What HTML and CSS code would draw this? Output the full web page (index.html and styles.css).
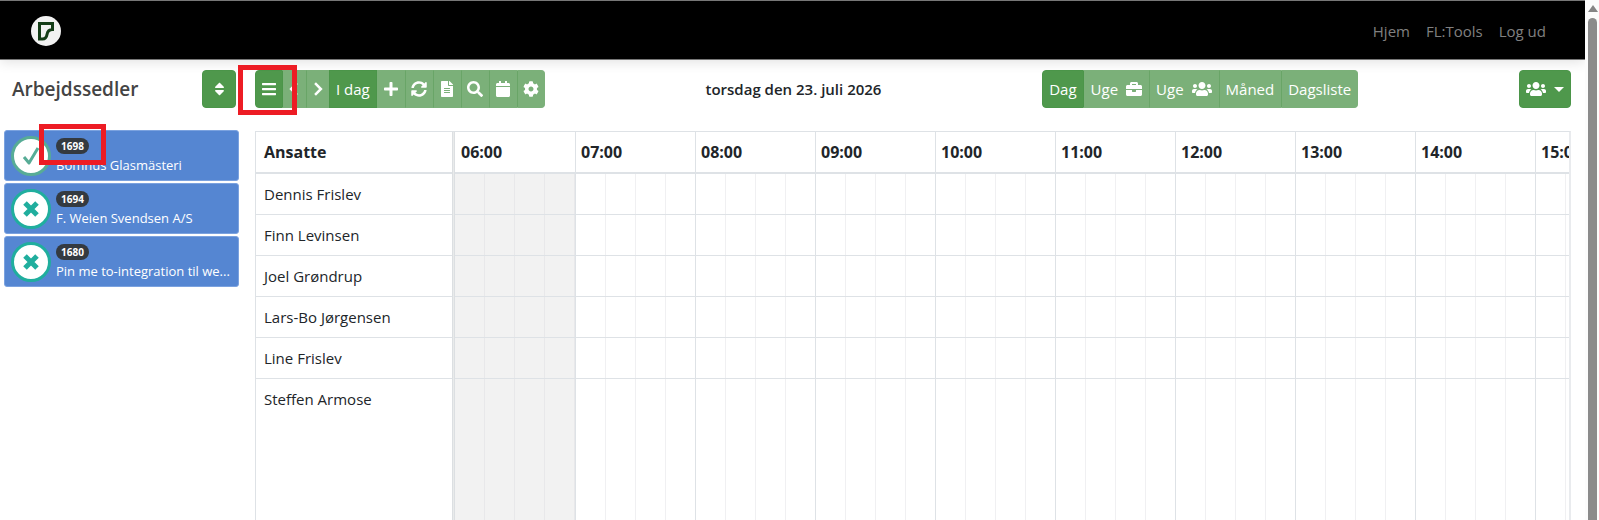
FILE: index.html
```html
<!DOCTYPE html>
<html lang="da">
<head>
    <meta charset="UTF-8">
    <meta name="viewport" content="width=device-width, initial-scale=1.0">
    <title>Arbejdssedler</title>
    <link rel="stylesheet" href="styles.css">
</head>
<body>
    <!-- Icon set -->
    <svg class="icon-defs" aria-hidden="true">
        <symbol id="sort" viewBox="0 0 320 512"><path d="M41 288h238c21.4 0 32.1 25.9 17 41L177 448c-9.4 9.4-24.6 9.4-33.9 0L24 329c-15.1-15.1-4.4-41 17-41zm255-105L177 64c-9.4-9.4-24.6-9.4-33.9 0L24 183c-15.1 15.1-4.4 41 17 41h238c21.4 0 32.1-25.9 17-41z"/></symbol>
        <symbol id="bars" viewBox="0 0 448 512"><path d="M16 132h416c9 0 16-7 16-16V76c0-9-7-16-16-16H16C7 60 0 67 0 76v40c0 9 7 16 16 16zm0 160h416c9 0 16-7 16-16v-40c0-9-7-16-16-16H16c-9 0-16 7-16 16v40c0 9 7 16 16 16zm0 160h416c9 0 16-7 16-16v-40c0-9-7-16-16-16H16c-9 0-16 7-16 16v40c0 9 7 16 16 16z"/></symbol>
        <symbol id="prev" viewBox="0 0 320 512"><path d="M238 70L52 256l186 186" fill="none" stroke="currentColor" stroke-width="80"/></symbol>
        <symbol id="next" viewBox="0 0 320 512"><path d="M82 70l186 186L82 442" fill="none" stroke="currentColor" stroke-width="80"/></symbol>
        <symbol id="plus" viewBox="0 0 448 512"><path d="M416 208H272V64c0-17.67-14.33-32-32-32h-32c-17.67 0-32 14.33-32 32v144H32c-17.67 0-32 14.33-32 32v32c0 17.67 14.33 32 32 32h144v144c0 17.67 14.33 32 32 32h32c17.67 0 32-14.33 32-32V304h144c17.67 0 32-14.33 32-32v-32c0-17.67-14.33-32-32-32z"/></symbol>
        <symbol id="sync" viewBox="0 0 512 512"><path d="M370.72 133.28C339.458 104.008 298.888 87.962 255.848 88c-77.458.068-144.328 53.178-162.791 126.85-1.344 5.363-6.122 9.15-11.651 9.15H24.103c-7.498 0-13.194-6.807-11.807-14.176C33.933 94.924 134.813 8 256 8c66.448 0 126.791 26.136 171.315 68.685L463.03 40.97C478.149 25.851 504 36.559 504 57.941V192c0 13.255-10.745 24-24 24H345.941c-21.382 0-32.09-25.851-16.971-40.971l41.75-41.749zM32 296h134.059c21.382 0 32.09 25.851 16.971 40.971l-41.75 41.75c31.262 29.273 71.835 45.319 114.876 45.28 77.418-.07 144.315-53.144 162.787-126.849 1.344-5.363 6.122-9.15 11.651-9.15h57.304c7.498 0 13.194 6.807 11.807 14.176C478.067 417.076 377.187 504 256 504c-66.448 0-126.791-26.136-171.315-68.685L48.97 471.03C33.851 486.149 8 475.441 8 454.059V320c0-13.255 10.745-24 24-24z"/></symbol>
        <symbol id="file" viewBox="0 0 384 512"><path d="M224 136V0H24C10.7 0 0 10.7 0 24v464c0 13.3 10.7 24 24 24h336c13.3 0 24-10.7 24-24V160H248c-13.2 0-24-10.8-24-24zm64 236c0 6.6-5.4 12-12 12H108c-6.6 0-12-5.4-12-12v-8c0-6.6 5.4-12 12-12h168c6.6 0 12 5.4 12 12v8zm0-64c0 6.6-5.4 12-12 12H108c-6.6 0-12-5.4-12-12v-8c0-6.6 5.4-12 12-12h168c6.6 0 12 5.4 12 12v8zm0-72v8c0 6.6-5.4 12-12 12H108c-6.6 0-12-5.4-12-12v-8c0-6.6 5.4-12 12-12h168c6.6 0 12 5.4 12 12zm96-114.1v6.1H256V0h6.1c6.4 0 12.5 2.5 17 7l97.9 98c4.5 4.5 7 10.6 7 16.9z"/></symbol>
        <symbol id="search" viewBox="0 0 512 512"><path d="M505 442.7L405.3 343c-4.5-4.5-10.6-7-17-7H372c27.6-35.3 44-79.7 44-128C416 93.1 322.9 0 208 0S0 93.1 0 208s93.1 208 208 208c48.3 0 92.7-16.4 128-44v16.3c0 6.4 2.5 12.5 7 17l99.7 99.7c9.4 9.4 24.6 9.4 33.9 0l28.3-28.3c9.4-9.4 9.4-24.6.1-34zM208 336c-70.7 0-128-57.2-128-128 0-70.7 57.2-128 128-128 70.7 0 128 57.2 128 128 0 70.7-57.2 128-128 128z"/></symbol>
        <symbol id="calendar" viewBox="0 0 448 512"><path d="M12 192h424c6.6 0 12 5.4 12 12v260c0 26.5-21.5 48-48 48H48c-26.5 0-48-21.5-48-48V204c0-6.6 5.4-12 12-12zm436-44v-36c0-26.5-21.5-48-48-48h-48V12c0-6.6-5.4-12-12-12h-40c-6.6 0-12 5.4-12 12v52H160V12c0-6.6-5.4-12-12-12h-40c-6.6 0-12 5.4-12 12v52H48C21.5 64 0 85.5 0 112v36c0 6.6 5.4 12 12 12h424c6.6 0 12-5.4 12-12z"/></symbol>
        <symbol id="cog" viewBox="0 0 512 512"><path d="M487.4 315.7l-42.6-24.6c4.3-23.2 4.3-47 0-70.2l42.6-24.6c4.9-2.8 7.1-8.6 5.5-14-11.1-35.6-30-67.8-54.7-94.6-3.8-4.1-10-5.1-14.8-2.3L380.8 110c-17.9-15.4-38.5-27.3-60.8-35.1V25.8c0-5.6-3.9-10.5-9.4-11.7-36.7-8.2-74.3-7.8-109.2 0-5.5 1.2-9.4 6.1-9.4 11.7V75c-22.2 7.9-42.8 19.8-60.8 35.1L88.7 85.5c-4.9-2.8-11-1.9-14.8 2.3-24.7 26.7-43.6 58.9-54.7 94.6-1.7 5.4.6 11.2 5.5 14L67.3 221c-4.3 23.2-4.3 47 0 70.2l-42.6 24.6c-4.9 2.8-7.1 8.6-5.5 14 11.1 35.6 30 67.8 54.7 94.6 3.8 4.1 10 5.1 14.8 2.3l42.6-24.6c17.9 15.4 38.5 27.3 60.8 35.1v49.2c0 5.6 3.9 10.5 9.4 11.7 36.7 8.2 74.3 7.8 109.2 0 5.5-1.2 9.4-6.1 9.4-11.7v-49.2c22.2-7.9 42.8-19.8 60.8-35.1l42.6 24.6c4.9 2.8 11 1.9 14.8-2.3 24.7-26.7 43.6-58.9 54.7-94.6 1.5-5.5-.7-11.3-5.6-14.1zM256 336c-44.1 0-80-35.9-80-80s35.9-80 80-80 80 35.9 80 80-35.9 80-80 80z"/></symbol>
        <symbol id="briefcase" viewBox="0 0 512 512"><path d="M320 336c0 8.84-7.16 16-16 16h-96c-8.84 0-16-7.16-16-16v-48H0v144c0 25.6 22.4 48 48 48h416c25.6 0 48-22.4 48-48V288H320v48zm144-208h-80V80c0-25.6-22.4-48-48-48H176c-25.6 0-48 22.4-48 48v48H48c-25.6 0-48 22.4-48 48v80h512v-80c0-25.6-22.4-48-48-48zm-144 0H192V96h128v32z"/></symbol>
        <symbol id="users" viewBox="0 0 640 512"><path d="M96 224c35.3 0 64-28.7 64-64s-28.7-64-64-64-64 28.7-64 64 28.7 64 64 64zm448 0c35.3 0 64-28.7 64-64s-28.7-64-64-64-64 28.7-64 64 28.7 64 64 64zm32 32h-64c-17.6 0-33.5 7.1-45.1 18.6 40.3 22.1 68.9 62 75.1 109.4h66c17.7 0 32-14.3 32-32v-32c0-35.3-28.7-64-64-64zm-256 0c61.9 0 112-50.1 112-112S381.9 32 320 32 208 82.1 208 144s50.1 112 112 112zm76.8 32h-8.3c-20.8 10-43.9 16-68.5 16s-47.6-6-68.5-16h-8.3C179.6 288 128 339.6 128 403.2V432c0 26.5 21.5 48 48 48h288c26.5 0 48-21.5 48-48v-28.8c0-63.6-51.6-115.2-115.2-115.2zm-223.7-13.4C161.5 263.1 145.6 256 128 256H64c-35.3 0-64 28.7-64 64v32c0 17.7 14.3 32 32 32h65.9c6.3-47.4 34.9-87.3 75.2-109.4z"/></symbol>
        <symbol id="check" viewBox="0 0 20 20"><path d="M3 11l5 6 9-15" fill="none" stroke="currentColor" stroke-width="3" stroke-linejoin="round"/></symbol>
        <symbol id="times" viewBox="0 0 20 20"><path d="M4 4l12 12M16 4L4 16" fill="none" stroke="currentColor" stroke-width="5"/></symbol>
    </svg>

    <div class="page">
        <header class="navbar">
            <a class="brand" href="#" aria-label="Forside">
                <svg viewBox="0 0 30 30" width="30" height="30">
                    <circle cx="15" cy="15" r="15" fill="#f2f2f2"/>
                    <path d="M8.500 7.500h13v6c-4 0-5 2-5.500 5-.5 3-2 4.500-4.500 4.500h-3z" fill="none" stroke="#143d17" stroke-width="3"/>
                </svg>
            </a>
            <nav class="nav-links">
                <a href="#">Hjem</a>
                <a href="#">FL:Tools</a>
                <a href="#">Log ud</a>
            </nav>
        </header>

        <div class="content">
            <!-- Left column: work orders -->
            <aside class="sidebar">
                <div class="sidebar-head">
                    <h2>Arbejdssedler</h2>
                    <button class="btn sort-btn" aria-label="Sorter"><svg class="icon narrow"><use href="#sort"/></svg></button>
                </div>
                <ul class="orders">
                    <li class="order done">
                        <span class="status"><svg class="status-icon"><use href="#check"/></svg></span>
                        <div class="order-text">
                            <span class="badge">1698</span>
                            <span class="customer">Bomhus Glasmästeri</span>
                        </div>
                        <span class="mark mark-number"></span>
                    </li>
                    <li class="order">
                        <span class="status"><svg class="status-icon"><use href="#times"/></svg></span>
                        <div class="order-text">
                            <span class="badge">1694</span>
                            <span class="customer">F. Weien Svendsen A/S</span>
                        </div>
                    </li>
                    <li class="order">
                        <span class="status"><svg class="status-icon"><use href="#times"/></svg></span>
                        <div class="order-text">
                            <span class="badge">1680</span>
                            <span class="customer">Pin me to-integration til we...</span>
                        </div>
                    </li>
                </ul>
            </aside>

            <!-- Right column: calendar -->
            <main class="calendar">
                <div class="toolbar">
                    <div class="btn-group tools">
                        <button class="btn" aria-label="Menu"><svg class="icon"><use href="#bars"/></svg></button>
                        <button class="btn light" aria-label="Forrige"><svg class="icon narrow"><use href="#prev"/></svg></button>
                        <button class="btn light" aria-label="Næste"><svg class="icon narrow"><use href="#next"/></svg></button>
                        <button class="btn today">I dag</button>
                        <button class="btn light" aria-label="Tilføj"><svg class="icon"><use href="#plus"/></svg></button>
                        <button class="btn light" aria-label="Opdater"><svg class="icon"><use href="#sync"/></svg></button>
                        <button class="btn light" aria-label="Dokument"><svg class="icon"><use href="#file"/></svg></button>
                        <button class="btn light" aria-label="Søg"><svg class="icon"><use href="#search"/></svg></button>
                        <button class="btn light" aria-label="Kalender"><svg class="icon"><use href="#calendar"/></svg></button>
                        <button class="btn light" aria-label="Indstillinger"><svg class="icon"><use href="#cog"/></svg></button>
                        <span class="mark mark-menu"></span>
                    </div>
                    <h1>torsdag den 23. juli 2026</h1>
                    <div class="btn-group views">
                        <button class="btn">Dag</button>
                        <button class="btn light">Uge <svg class="icon"><use href="#briefcase"/></svg></button>
                        <button class="btn light">Uge <svg class="icon wide"><use href="#users"/></svg></button>
                        <button class="btn light">Måned</button>
                        <button class="btn light">Dagsliste</button>
                    </div>
                    <button class="btn people-btn" aria-label="Ansatte"><svg class="icon wide"><use href="#users"/></svg><span class="caret"></span></button>
                </div>

                <div class="schedule">
                    <table>
                        <colgroup>
                            <col class="col-staff">
                            <col class="col-divider">
                            <col class="col-hour" span="10">
                        </colgroup>
                        <thead>
                            <tr>
                                <th>Ansatte</th>
                                <th class="divider"></th>
                                <th>06:00</th>
                                <th>07:00</th>
                                <th>08:00</th>
                                <th>09:00</th>
                                <th>10:00</th>
                                <th>11:00</th>
                                <th>12:00</th>
                                <th>13:00</th>
                                <th>14:00</th>
                                <th>15:00</th>
                            </tr>
                        </thead>
                        <tbody>
                            <tr><td>Dennis Frislev</td><td class="divider"></td><td class="slot closed"></td><td class="slot"></td><td class="slot"></td><td class="slot"></td><td class="slot"></td><td class="slot"></td><td class="slot"></td><td class="slot"></td><td class="slot"></td><td class="slot"></td></tr>
                            <tr><td>Finn Levinsen</td><td class="divider"></td><td class="slot closed"></td><td class="slot"></td><td class="slot"></td><td class="slot"></td><td class="slot"></td><td class="slot"></td><td class="slot"></td><td class="slot"></td><td class="slot"></td><td class="slot"></td></tr>
                            <tr><td>Joel Grøndrup</td><td class="divider"></td><td class="slot closed"></td><td class="slot"></td><td class="slot"></td><td class="slot"></td><td class="slot"></td><td class="slot"></td><td class="slot"></td><td class="slot"></td><td class="slot"></td><td class="slot"></td></tr>
                            <tr><td>Lars-Bo Jørgensen</td><td class="divider"></td><td class="slot closed"></td><td class="slot"></td><td class="slot"></td><td class="slot"></td><td class="slot"></td><td class="slot"></td><td class="slot"></td><td class="slot"></td><td class="slot"></td><td class="slot"></td></tr>
                            <tr><td>Line Frislev</td><td class="divider"></td><td class="slot closed"></td><td class="slot"></td><td class="slot"></td><td class="slot"></td><td class="slot"></td><td class="slot"></td><td class="slot"></td><td class="slot"></td><td class="slot"></td><td class="slot"></td></tr>
                            <tr class="last"><td>Steffen Armose</td><td class="divider"></td><td class="slot closed"></td><td class="slot"></td><td class="slot"></td><td class="slot"></td><td class="slot"></td><td class="slot"></td><td class="slot"></td><td class="slot"></td><td class="slot"></td><td class="slot"></td></tr>
                        </tbody>
                    </table>
                </div>
            </main>
        </div>
    </div>

    <div class="scrollbar" aria-hidden="true">
        <span class="scroll-up"></span>
        <span class="scroll-thumb"></span>
    </div>
</body>
</html>
```
FILE: styles.css
```css
* {
  box-sizing: border-box;
}

body {
  margin: 0;
  height: 100vh;
  display: flex; /* page + scrollbar */
  overflow: hidden;
  font-family: "Open Sans", "Noto Sans", sans-serif;
  font-size: 15px;
  line-height: 24px;
  color: #212529;
  background: #fff;
}

h1,
h2 {
  margin: 0;
  font-weight: 600;
}

.page {
  flex: 1;
  min-width: 0;
  display: flex;
  flex-direction: column;
}

/* Icons */
.icon-defs {
  display: none;
}
.icon {
  width: 16px;
  height: 16px;
  fill: currentColor;
}
.icon.narrow {
  width: 11px;
}
.icon.wide {
  width: 20px;
}

/* Top navigation */
.navbar {
  height: 60px;
  padding: 2px 39px 0 31px;
  display: flex;
  align-items: center;
  justify-content: space-between;
  background: #000;
  border-top: 1px solid #777;
  border-bottom: 1px solid #777;
  box-shadow: 0 2px 12px rgba(0, 0, 0, 0.12);
}
.brand {
  display: flex;
}
.nav-links {
  display: flex;
  gap: 16px;
}
.nav-links a {
  color: #808080;
  text-decoration: none;
}

.content {
  flex: 1;
  min-height: 0;
  display: flex;
  gap: 16px;
  padding: 10px 14px 0 4px;
}

/* Buttons */
.btn {
  height: 38px;
  padding: 0 6px;
  display: flex;
  align-items: center;
  justify-content: center;
  gap: 8px;
  border: 1px solid #4b9549;
  border-radius: 4px;
  background: #4f984c;
  color: #fff;
  font: inherit;
}
.btn.light {
  background: #7bb079;
  border-color: #7bb079;
}
.btn-group {
  position: relative;
  display: flex;
}
.btn-group .btn {
  border-radius: 0;
}
.btn-group .btn.light + .btn.light {
  border-left-color: #69a567;
}
.btn-group .btn:first-child {
  border-radius: 4px 0 0 4px;
}
.btn-group .btn:last-of-type {
  border-radius: 0 4px 4px 0;
}
.tools .btn {
  padding: 0 5px;
}
.tools .today {
  padding: 0 6px;
}
.caret {
  border: 5px solid transparent;
  border-top-color: #fff;
  border-bottom: 0;
}
.people-btn {
  width: 52px;
}

/* Left column */
.sidebar {
  width: 235px;
  flex: none;
}
.sidebar-head {
  height: 60px;
  padding: 0 3px 0 8px;
  display: flex;
  align-items: flex-start;
  justify-content: space-between;
}
.sidebar-head h2 {
  font-size: 19px;
  line-height: 38px;
  color: #444;
}
.sort-btn {
  width: 34px;
}
.orders {
  margin: 0;
  padding: 0;
  list-style: none;
  display: flex;
  flex-direction: column;
  gap: 2px;
}
.order {
  position: relative;
  height: 51px;
  padding: 0 4px 0 6px;
  display: flex;
  align-items: center;
  gap: 5px;
  border: 1px solid #7ba2df;
  border-radius: 3px;
  background: #5586d2;
  color: #fff;
}
.status {
  flex: none;
  width: 40px;
  height: 40px;
  display: flex;
  align-items: center;
  justify-content: center;
  border: 3px solid #20ae9e;
  border-radius: 50%;
  background: #fff;
  color: #20ae9e;
}
.done .status {
  border-color: #57ac96;
  color: #57ac96;
}
.status-icon {
  width: 20px;
  height: 20px;
}
.order-text {
  min-width: 0;
  padding-top: 2px;
  display: flex;
  flex-direction: column;
  align-items: flex-start;
}
.badge {
  padding: 0 5px;
  border-radius: 8px;
  background: #343a40;
  font-size: 10px;
  font-weight: 700;
  line-height: 16px;
}
.customer {
  max-width: 100%;
  overflow: hidden;
  font-size: 13px;
  line-height: 22px;
  text-overflow: ellipsis;
  white-space: nowrap;
}

/* Red frames around the highlighted items */
.mark {
  position: absolute;
  border: 5px solid #ed1c24;
}
.mark-menu {
  left: -17px;
  top: -5px;
  width: 59px;
  height: 50px;
}
.mark-number {
  left: 34px;
  top: -7px;
  width: 67px;
  height: 41px;
}

/* Calendar */
.calendar {
  flex: 1;
  min-width: 0;
  display: flex;
  flex-direction: column;
}
.toolbar {
  height: 61px;
  flex: none;
  display: flex;
  align-items: flex-start;
  justify-content: space-between;
}
.toolbar h1 {
  font-size: 15px;
  line-height: 38px;
}
.schedule {
  flex: 1;
  min-height: 0;
  overflow: hidden;
  border: 1px solid #dee2e6;
  border-right: 2px solid #e9ebee;
  border-bottom: 0;
}
table {
  width: 1399px; /* wider than the view, the rest is scrolled away */
  table-layout: fixed;
  border-spacing: 0;
}
.col-staff {
  width: 196px;
}
.col-divider {
  width: 3px;
}
.col-hour {
  width: 120px;
}
th,
td {
  height: 41px;
  padding: 0 8px;
  border-bottom: 1px solid #dee2e6;
  text-align: left;
  vertical-align: middle;
  white-space: nowrap;
}
th {
  height: 42px;
  border-bottom-width: 2px;
  font-size: 16px;
  font-weight: 700;
}
th + th,
.slot {
  border-left: 1px solid #dee2e6;
}
th + th {
  padding-left: 5px;
}
.divider {
  padding: 0;
  border: solid #dcdfe2;
  border-width: 0 1px;
  background: #e9ebeb;
}
th.divider {
  padding: 0;
}
th:nth-child(3) {
  padding-left: 6px;
}
th:nth-child(3),
.slot.closed {
  border-left: 0;
}
/* quarter-hour lines */
.slot {
  background: repeating-linear-gradient(90deg, transparent 0 29px, #f0f0f2 29px 30px);
}
.slot.closed {
  background: repeating-linear-gradient(90deg, #f2f2f2 0 29px, #e8e8ea 29px 30px);
}
.last td {
  height: 100vh;
  padding-top: 8px;
  border-bottom: 0;
  vertical-align: top;
}

/* Scrollbar */
.scrollbar {
  width: 14px;
  padding: 5px 1px 0 3px;
  display: flex;
  flex-direction: column;
  gap: 6px;
  background: #fcfcfc;
}
.scroll-up {
  border: 5px solid transparent;
  border-top: 0;
  border-bottom: 7px solid #858585;
}
.scroll-thumb {
  flex: 1;
  width: 9px;
  border-radius: 5px 5px 0 0;
  background: #8b8b8b;
}
```
